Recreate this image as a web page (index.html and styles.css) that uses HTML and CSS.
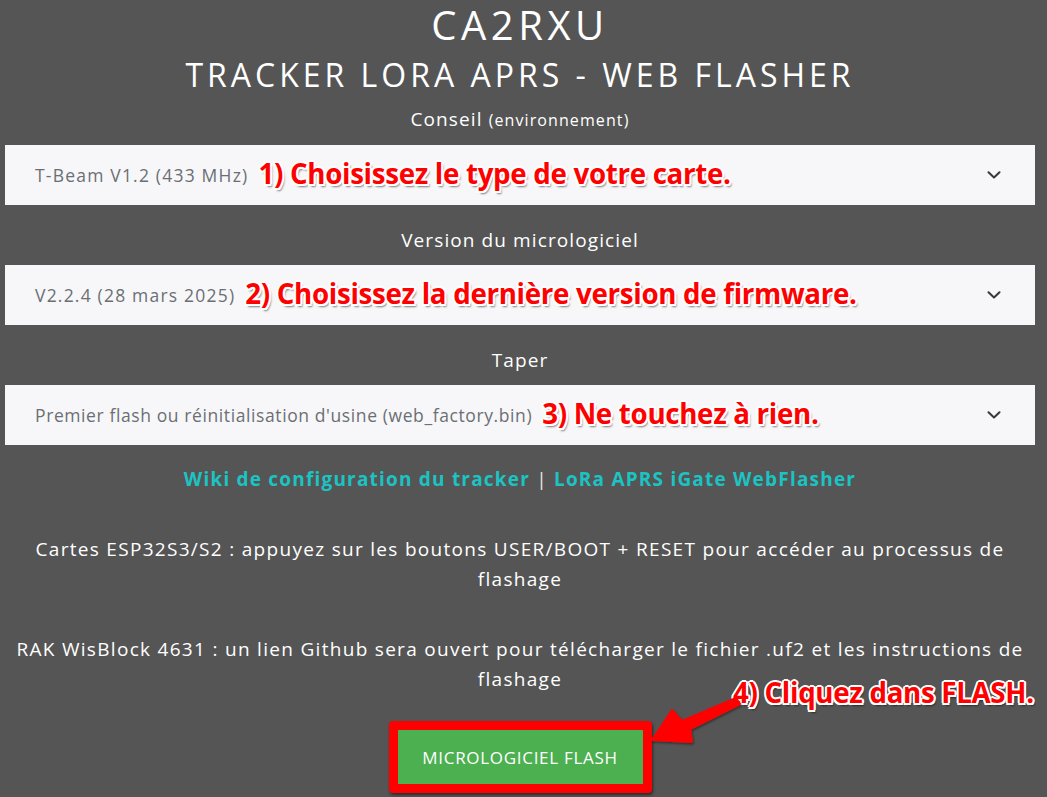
FILE: index.html
```html
<!DOCTYPE html>
<html lang="fr">
<head>
<meta charset="utf-8">
<title>CA2RXU Tracker LoRa APRS - Web Flasher</title>
<link rel="stylesheet" href="styles.css">
</head>
<body>
<div class="page">
  <h1 class="title">CA2RXU</h1>
  <h2 class="subtitle">TRACKER LORA APRS - WEB FLASHER</h2>

  <div class="label first">Conseil <small>(environnement)</small></div>
  <div class="select">
    <span class="value">T-Beam V1.2 (433 MHz)</span>
    <span class="note">1) Choisissez le type de votre carte.</span>
    <svg class="chev" width="14" height="8" viewBox="0 0 14 8"><path d="M1.5 1.2 L7 6.5 L12.5 1.2" fill="none" stroke="#343a40" stroke-width="2" stroke-linecap="round" stroke-linejoin="round"/></svg>
  </div>

  <div class="label">Version du micrologiciel</div>
  <div class="select">
    <span class="value">V2.2.4 (28 mars 2025)</span>
    <span class="note">2) Choisissez la dernière version de firmware.</span>
    <svg class="chev" width="14" height="8" viewBox="0 0 14 8"><path d="M1.5 1.2 L7 6.5 L12.5 1.2" fill="none" stroke="#343a40" stroke-width="2" stroke-linecap="round" stroke-linejoin="round"/></svg>
  </div>

  <div class="label">Taper</div>
  <div class="select">
    <span class="value long">Premier flash ou réinitialisation d'usine (web_factory.bin)</span>
    <span class="note">3) Ne touchez à rien.</span>
    <svg class="chev" width="14" height="8" viewBox="0 0 14 8"><path d="M1.5 1.2 L7 6.5 L12.5 1.2" fill="none" stroke="#343a40" stroke-width="2" stroke-linecap="round" stroke-linejoin="round"/></svg>
  </div>

  <div class="links">
    <a href="#">Wiki de configuration du tracker</a> <span class="sep">|</span> <a href="#">LoRa APRS iGate WebFlasher</a>
  </div>

  <p class="info first-info">Cartes ESP32S3/S2 : appuyez sur les boutons USER/BOOT + RESET pour accéder au processus de flashage</p>
  <p class="info">RAK WisBlock 4631 : un lien Github sera ouvert pour télécharger le fichier .uf2 et les instructions de flashage</p>

  <div class="action">
    <div class="highlight">
      <button class="flash" type="button">MICROLOGICIEL FLASH</button>
    </div>
    <span class="note note4">4) Cliquez dans FLASH.</span>
    <svg class="arrow" width="100" height="60" viewBox="0 0 100 60">
      <defs>
        <filter id="sh" x="-20%" y="-20%" width="140%" height="140%">
          <feDropShadow dx="1" dy="1.5" stdDeviation="1" flood-color="#000" flood-opacity="0.45"/>
        </filter>
      </defs>
      <polygon filter="url(#sh)" fill="#ff0000" stroke="#ff0000" stroke-width="2" stroke-linejoin="round"
        points="86,3 90,9 40,34 42,47 2,45 22,15 32,26"/>
    </svg>
  </div>
</div>
</body>
</html>
```
FILE: styles.css
```css
html, body {
  margin: 0;
  padding: 0;
  background: #555555;
}
body {
  font-family: "Open Sans", "Noto Sans", sans-serif;
  color: #ffffff;
}
.page {
  width: 1030px;
  margin-left: 5px;
  text-align: center;
}
.title {
  margin: 0;
  font-size: 40px;
  line-height: 50px;
  font-weight: 500;
  letter-spacing: 4.5px;
}
.subtitle {
  margin: 5px 0 0;
  font-size: 32px;
  line-height: 40px;
  font-weight: 500;
  letter-spacing: 4px;
}
.label {
  font-size: 19px;
  line-height: 36px;
  padding: 17px 0 7px;
  letter-spacing: 1.1px;
}
.label.first {
  padding: 6px 0 7px;
}
.label small {
  font-size: 16px;
}
.select {
  height: 60px;
  background: #f7f7f9;
  display: flex;
  align-items: center;
  padding: 0 34px 0 30px;
  text-align: left;
  color: #6b6f74;
  font-size: 17.5px;
  letter-spacing: 1.2px;
  gap: 10px;
}
.value {
  white-space: nowrap;
}
.value.long {
  letter-spacing: 0.6px;
}
.chev {
  margin-left: auto;
  flex: none;
}
.note {
  font-family: "Open Sans", sans-serif;
  font-weight: 700;
  font-size: 27.7px;
  color: #ff0000;
  white-space: nowrap;
  letter-spacing: -0.3px;
  text-shadow:
    2px 0 0 #fff, -2px 0 0 #fff, 0 2px 0 #fff, 0 -2px 0 #fff,
    1.5px 1.5px 0 #fff, -1.5px 1.5px 0 #fff, 1.5px -1.5px 0 #fff, -1.5px -1.5px 0 #fff,
    2px 3px 2px rgba(0,0,0,0.5);
}
.select .note {
  margin-bottom: 5px;
}
.links {
  padding-top: 16px;
  line-height: 36px;
  font-size: 19px;
  font-weight: 700;
  letter-spacing: 1.2px;
}
.links a {
  color: #1cc3c3;
  text-decoration: none;
}
.sep {
  color: #e8e8e8;
  font-weight: 400;
}
.info {
  margin: 40px 0 0;
  font-size: 19px;
  line-height: 30px;
  letter-spacing: 1.3px;
}
.info.first-info {
  margin-top: 37px;
}
.action {
  position: relative;
  display: flex;
  justify-content: center;
  margin-top: 27px;
  height: 76px;
}
.highlight {
  padding: 1px;
  border: 8px solid #ff0000;
  border-radius: 4px;
  box-shadow: 1px 2px 3px rgba(0,0,0,0.5);
  height: 54px;
  background: #ff0000;
}
.flash {
  display: block;
  width: 245px;
  height: 54px;
  border: 0;
  background: #4caf50;
  color: #ffffff;
  font-family: "Open Sans", sans-serif;
  font-size: 17px;
  font-weight: 500;
  letter-spacing: 0.7px;
  padding: 0;
}
.note4 {
  position: absolute;
  left: 728px;
  top: -48px;
}
.arrow {
  position: absolute;
  left: 645px;
  top: -26px;
}
```
